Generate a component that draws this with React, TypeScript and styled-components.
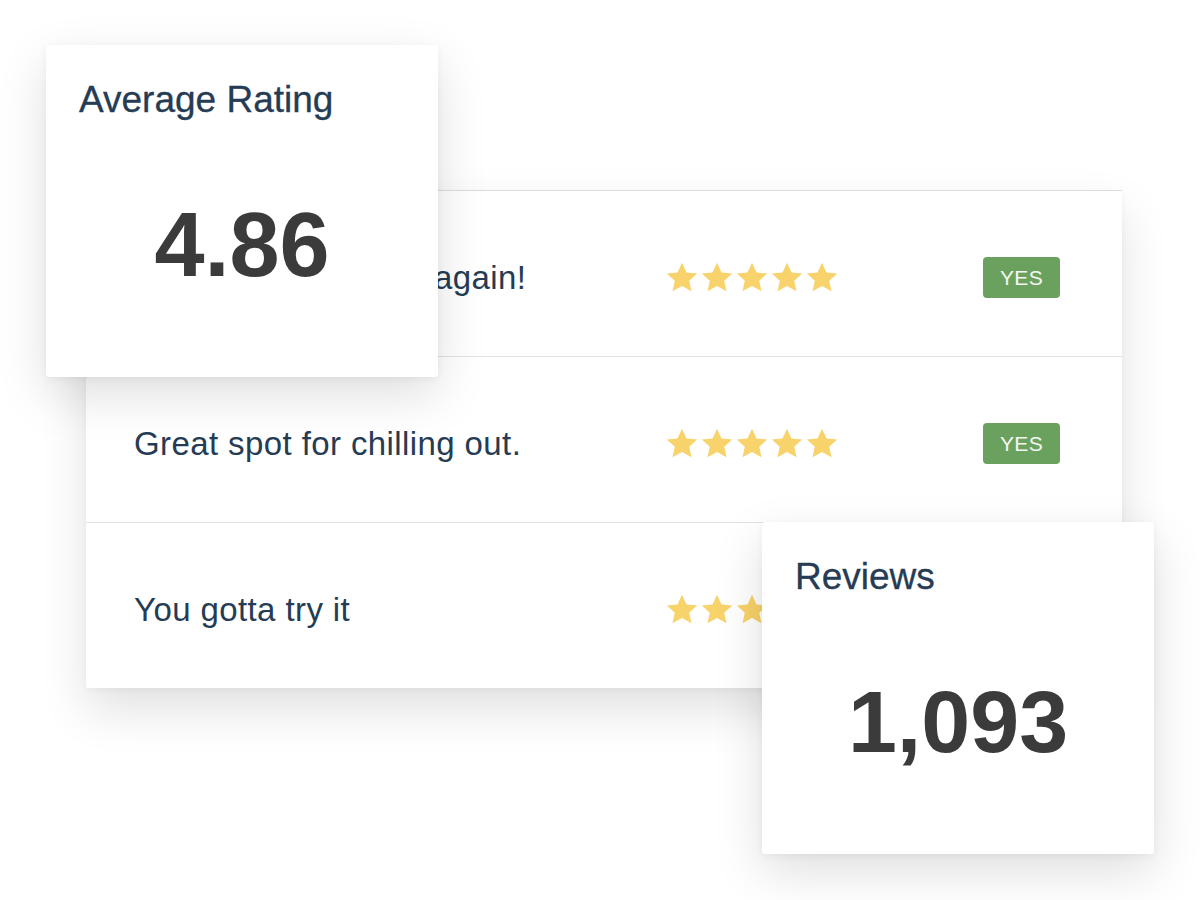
import React from "react";
import styled, { createGlobalStyle } from "styled-components";

const GlobalStyle = createGlobalStyle`
  html, body {
    margin: 0;
    padding: 0;
    background: #ffffff;
  }
  body {
    font-family: "Liberation Sans", Arial, Helvetica, sans-serif;
  }
`;

const Stage = styled.div`
  position: relative;
  width: 1200px;
  height: 900px;
  overflow: hidden;
  background: #ffffff;
  padding: 190px 0 0 86px;
  box-sizing: border-box;
`;

const TableCard = styled.div`
  width: 1036px;
  background: #ffffff;
  box-shadow: 0 22px 48px rgba(0, 0, 0, 0.12), 0 2px 6px rgba(0, 0, 0, 0.04);
  border-radius: 2px;
`;

const Row = styled.div`
  display: grid;
  grid-template-columns: 531px 176px 1fr;
  align-items: center;
  height: 166px;
  box-sizing: border-box;
  border-top: 1px solid #e2e2e2;
  padding: 8px 62px 0 48px;

  &:first-child {
    border-top-color: #dedede;
  }
`;

const Comment = styled.div`
  font-size: 33px;
  letter-spacing: 0.4px;
  color: #253c54;
  white-space: nowrap;
`;

const Stars = styled.div`
  display: flex;
  gap: 1px;
`;

const Badge = styled.div`
  justify-self: end;
  width: 77px;
  height: 41px;
  border-radius: 4px;
  background: #6ba15e;
  color: #f4f7f2;
  font-size: 21px;
  display: flex;
  align-items: center;
  justify-content: center;
  letter-spacing: 0.3px;
`;

const StatCard = styled.div<{ $left: number; $top: number }>`
  position: absolute;
  left: ${(p) => p.$left}px;
  top: ${(p) => p.$top}px;
  width: 392px;
  height: 332px;
  box-sizing: border-box;
  padding: 35px 33px 0;
  background: #ffffff;
  border-radius: 3px;
  box-shadow: 0 18px 50px rgba(0, 0, 0, 0.13), 0 2px 8px rgba(0, 0, 0, 0.05);
  display: flex;
  flex-direction: column;
`;

const StatTitle = styled.div`
  font-size: 37px;
  line-height: 40px;
  color: #253c54;
  -webkit-text-stroke: 0.3px #253c54;
`;

const StatValue = styled.div<{ $size: number }>`
  margin-top: 75px;
  text-align: center;
  font-size: ${(p) => p.$size}px;
  line-height: 100px;
  font-weight: 700;
  color: #3b3b3b;
`;

const Star = () => (
  <svg width="34" height="34" viewBox="0 0 24 24">
    <path
      d="M12 1.2l3.2 6.9 7.5.8-5.6 5.1 1.6 7.4L12 17.6l-6.7 3.8 1.6-7.4-5.6-5.1 7.5-.8z"
      fill="#f8d26a"
    />
  </svg>
);

const reviews = [
  { text: "Will definitely come again!", stars: 5 },
  { text: "Great spot for chilling out.", stars: 5 },
  { text: "You gotta try it", stars: 5 },
];

export default function App() {
  return (
    <>
      <GlobalStyle />
      <Stage>
        <TableCard>
          {reviews.map((r, i) => (
            <Row key={i}>
              <Comment>{r.text}</Comment>
              <Stars>
                {Array.from({ length: r.stars }).map((_, j) => (
                  <Star key={j} />
                ))}
              </Stars>
              {i < 2 ? <Badge>YES</Badge> : <span />}
            </Row>
          ))}
        </TableCard>

        <StatCard $left={46} $top={45}>
          <StatTitle>Average Rating</StatTitle>
          <StatValue $size={90}>4.86</StatValue>
        </StatCard>

        <StatCard $left={762} $top={522}>
          <StatTitle>Reviews</StatTitle>
          <StatValue $size={88}>1,093</StatValue>
        </StatCard>
      </Stage>
    </>
  );
}
